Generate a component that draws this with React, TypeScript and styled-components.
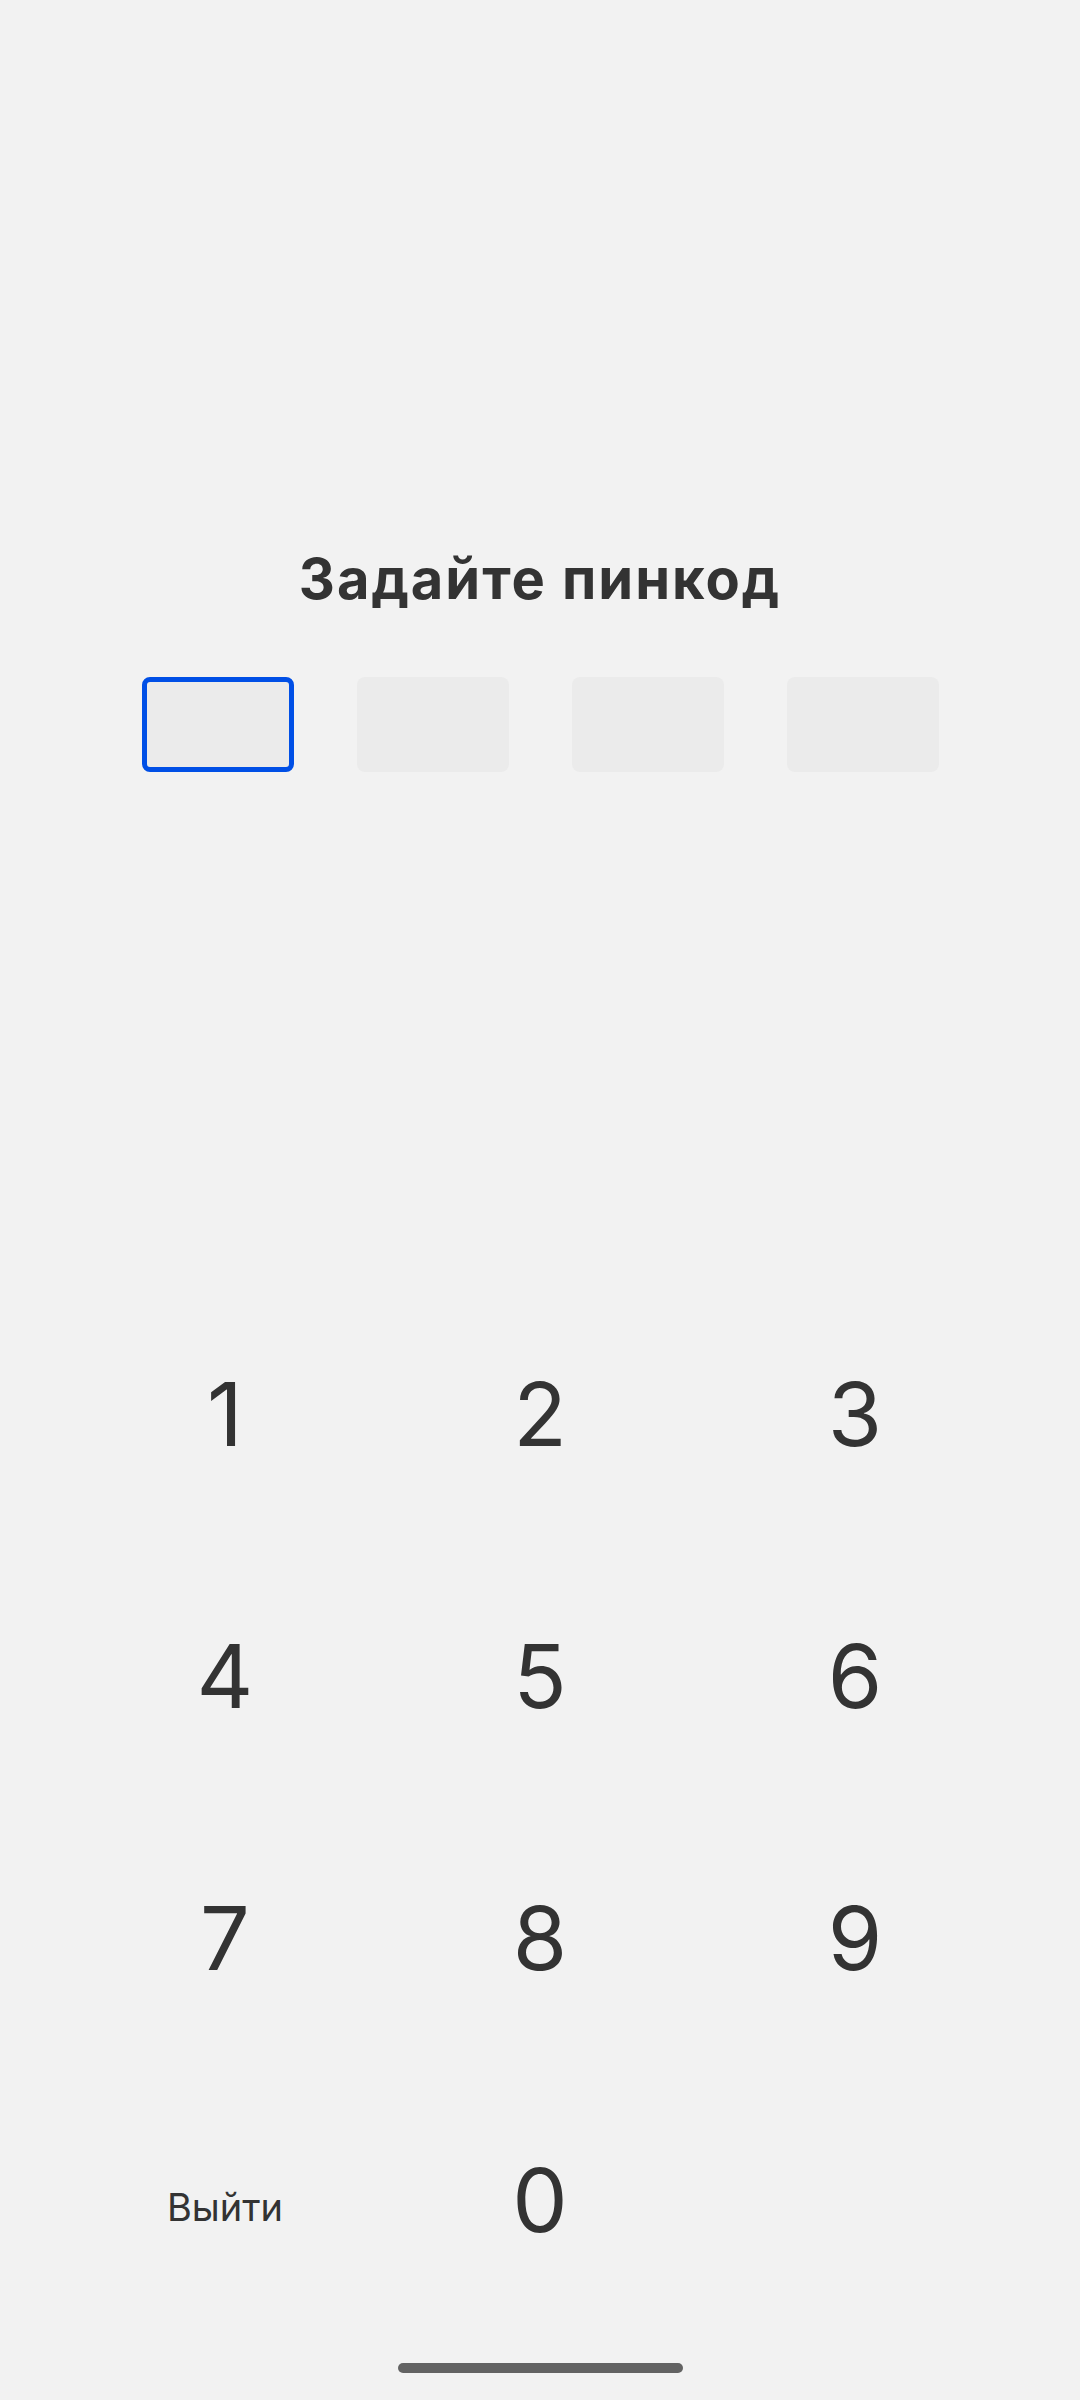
import React from 'react'
import styled, { createGlobalStyle } from 'styled-components'

const GlobalStyle = createGlobalStyle`
  html, body {
    margin: 0;
    padding: 0;
    background: #f2f2f2;
  }
  body {
    font-family: Inter, 'Open Sans', sans-serif;
    color: #333333;
  }
`

const Screen = styled.div`
  width: 1080px;
  height: 2400px;
  background: #f2f2f2;
  display: flex;
  flex-direction: column;
  align-items: center;
  padding-top: 551px;
  box-sizing: border-box;
`

const Title = styled.h1`
  margin: 0;
  font-size: 56px;
  line-height: 56px;
  font-weight: 700;
  letter-spacing: 2px;
  color: #333333;
`

const CodeRow = styled.div`
  display: flex;
  gap: 63px;
  margin-top: 70px;
`

const CodeCell = styled.div<{ active?: boolean }>`
  width: 152px;
  height: 95px;
  box-sizing: border-box;
  border-radius: 8px;
  background: #ebebeb;
  border: ${({ active }) => (active ? '5px solid #004fe6' : 'none')};
`

const Keypad = styled.div`
  display: grid;
  grid-template-columns: repeat(3, 315px);
  grid-auto-rows: 262px;
  margin-top: 511px;
`

const Key = styled.button<{ small?: boolean }>`
  display: flex;
  align-items: center;
  justify-content: center;
  border: none;
  background: transparent;
  padding: ${({ small }) => (small ? '14px 0 0' : '0')};
  font-family: Inter, 'Open Sans', sans-serif;
  font-size: ${({ small }) => (small ? '38px' : '88px')};
  line-height: 1;
  font-weight: 400;
  color: #333333;
`

const HomeBar = styled.div`
  width: 285px;
  height: 10px;
  border-radius: 5px;
  background: #636363;
  margin-top: 32px;
`

const keys = ['1', '2', '3', '4', '5', '6', '7', '8', '9']

export default function App() {
  return (
    <>
      <GlobalStyle />
      <Screen>
        <Title>Задайте пинкод</Title>
        <CodeRow>
          <CodeCell active />
          <CodeCell />
          <CodeCell />
          <CodeCell />
        </CodeRow>
        <Keypad>
          {keys.map((k) => (
            <Key key={k}>{k}</Key>
          ))}
          <Key small>Выйти</Key>
          <Key>0</Key>
          <Key as="div" />
        </Keypad>
        <HomeBar />
      </Screen>
    </>
  )
}
